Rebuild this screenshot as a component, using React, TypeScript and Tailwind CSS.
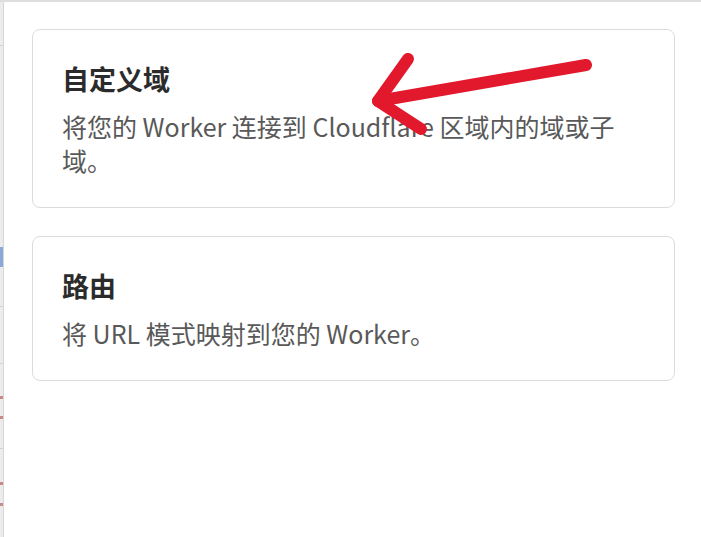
import React from 'react';

function OptionCard({ title, children }: { title: string; children: React.ReactNode }) {
  return (
    <div className="rounded-lg border border-[#dcdcdc] bg-white px-[29px] pt-[31px] pb-[30px]">
      <h3 className="text-[27px] font-bold leading-[36px] text-[#2b2b2b]">{title}</h3>
      <p className="mt-[12px] text-[25px] leading-[34px] text-[#595959]">{children}</p>
    </div>
  );
}

function SidebarEdge() {
  return (
    <div className="flex w-[4px] shrink-0 flex-col border-r border-[#d6d6d6] bg-[#ececec]">
      <div className="h-[44px] border-b border-[#d0d0d0]" />
      <div className="h-[201px]" />
      <div className="h-[20px] bg-[#8aa8d8]" />
      <div className="h-[40px] border-b border-[#d0d0d0]" />
      <div className="h-[57px] border-b border-[#d0d0d0]" />
      <div className="h-[32px]" />
      <div className="h-[23px] border-y-[3px] border-[#c98a8a]" />
      <div className="h-[30px] border-b border-[#d0d0d0]" />
      <div className="h-[33px]" />
      <div className="h-[24px] border-y-[3px] border-[#c98a8a]" />
      <div className="flex-1" />
    </div>
  );
}

function Arrow() {
  return (
    <svg
      className="pointer-events-none absolute left-0 top-0"
      width="701"
      height="537"
      viewBox="0 0 701 537"
    >
      <g stroke="#e2182c" strokeWidth="12" strokeLinecap="round" strokeLinejoin="round" fill="none">
        <path d="M586 63 L378 99" />
        <path d="M408 57 L378 99 L421 127" />
      </g>
    </svg>
  );
}

export default function App() {
  return (
    <div
      className="relative flex h-[537px] w-[701px] overflow-hidden border-t-2 border-[#dedede] bg-white"
      style={{ fontFamily: '"Noto Sans CJK SC", sans-serif' }}
    >
      <SidebarEdge />
      <div className="flex flex-1 flex-col gap-[28px] pl-[28px] pr-[26px] pt-[27px]">
        <OptionCard title="自定义域">将您的 Worker 连接到 Cloudflare 区域内的域或子域。</OptionCard>
        <OptionCard title="路由">将 URL 模式映射到您的 Worker。</OptionCard>
      </div>
      <Arrow />
    </div>
  );
}
